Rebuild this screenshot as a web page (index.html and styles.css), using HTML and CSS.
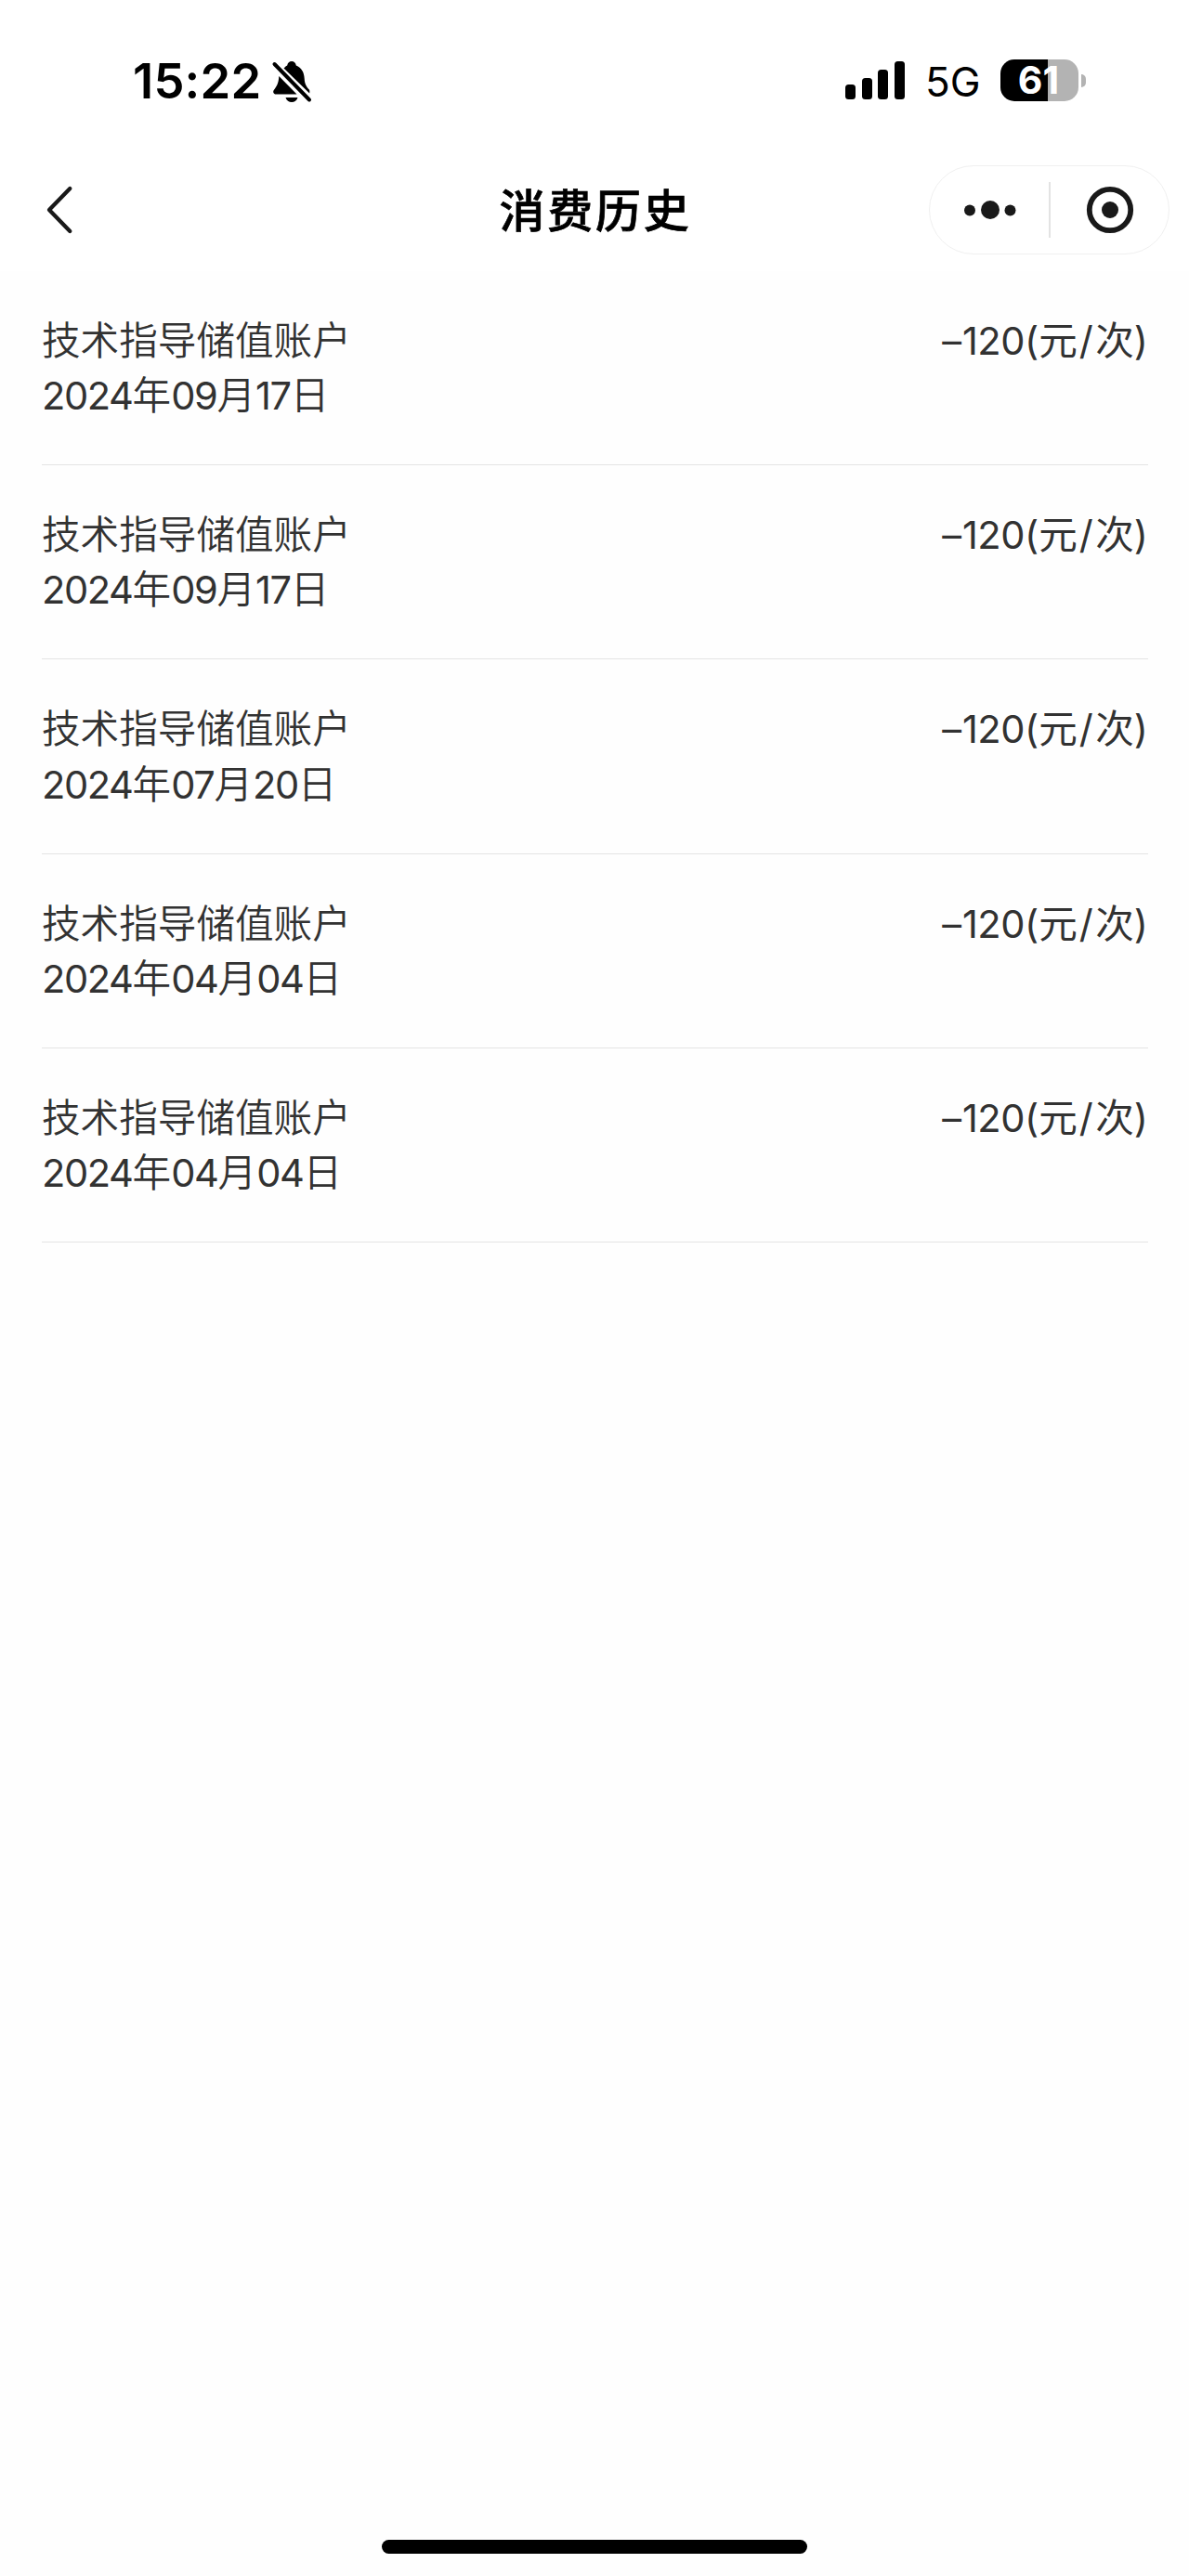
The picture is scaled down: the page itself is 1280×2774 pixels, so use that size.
FILE: index.html
```html
<!DOCTYPE html>
<html lang="zh-CN">
<head>
<meta charset="utf-8">
<title>消费历史</title>
<link rel="stylesheet" href="styles.css">
</head>
<body>
<div class="screen">
  <header class="top">
    <div class="status">
      <div class="status-left">
        <span class="time">15:22</span>
        <svg class="bell" width="44" height="48" viewBox="0 0 44 48">
          <path d="M13.5 9.5C15.200 7.800 16 7 17.200 6.500C17.700 3.700 19.500 2 22 2S26.300 3.700 26.800 6.500C32.500 8.800 35.500 14 35.700 20.500C36 26 37.500 29 40.800 32.500C41.500 33.500 41.400 35 41.200 36.500Z"/>
          <path d="M8.300 18L27.500 37.500H5C2.600 37.500 1.400 35 2.800 33C5.500 29.500 8 26 8.300 18Z"/>
          <path d="M15.500 41H28.500C27.500 44.500 25 46 22 46S16.500 44.500 15.500 41Z"/>
          <path class="slash" d="M3.500 5L41 43.500"/>
        </svg>
      </div>
      <div class="status-right">
        <div class="signal"><i class="bar b1"></i><i class="bar b2"></i><i class="bar b3"></i><i class="bar b4"></i></div>
        <span class="network">5G</span>
        <div class="battery">
          <div class="battery-body">61</div>
          <div class="battery-cap"></div>
        </div>
      </div>
    </div>
    <nav class="nav">
      <svg class="back" width="30" height="54" viewBox="0 0 30 54"><path d="M26.300 4L4 27L26.300 50"/></svg>
      <h1 class="title">消费历史</h1>
      <div class="capsule">
        <svg class="more" width="60" height="30" viewBox="0 0 60 30"><circle cx="8" cy="15.500" r="6"/><circle cx="30" cy="15" r="10"/><circle cx="51.500" cy="15.500" r="6"/></svg>
        <i class="split"></i>
        <svg class="close" width="52" height="52" viewBox="0 0 52 52"><circle class="ring" cx="26" cy="26" r="22.200"/><circle cx="26" cy="26" r="9"/></svg>
      </div>
    </nav>
  </header>
  <main class="list">
    <div class="row"><div class="info"><div>技术指导储值账户</div><div><span class="num">2024</span>年<span class="num">09</span>月<span class="num">17</span>日</div></div><div class="amount"><span class="dash">–</span><span class="num">120</span>(元<span class="per">/</span>次)</div></div>
    <div class="row"><div class="info"><div>技术指导储值账户</div><div><span class="num">2024</span>年<span class="num">09</span>月<span class="num">17</span>日</div></div><div class="amount"><span class="dash">–</span><span class="num">120</span>(元<span class="per">/</span>次)</div></div>
    <div class="row"><div class="info"><div>技术指导储值账户</div><div><span class="num">2024</span>年<span class="num">07</span>月<span class="num">20</span>日</div></div><div class="amount"><span class="dash">–</span><span class="num">120</span>(元<span class="per">/</span>次)</div></div>
    <div class="row"><div class="info"><div>技术指导储值账户</div><div><span class="num">2024</span>年<span class="num">04</span>月<span class="num">04</span>日</div></div><div class="amount"><span class="dash">–</span><span class="num">120</span>(元<span class="per">/</span>次)</div></div>
    <div class="row"><div class="info"><div>技术指导储值账户</div><div><span class="num">2024</span>年<span class="num">04</span>月<span class="num">04</span>日</div></div><div class="amount"><span class="dash">–</span><span class="num">120</span>(元<span class="per">/</span>次)</div></div>
  </main>
  <footer class="foot"><div class="home"></div></footer>
</div>
</body>
</html>
```

FILE: styles.css
```css
* { box-sizing: border-box; }
body { margin: 0; background: #fdfdfd; font-family: Inter, "Noto Sans CJK SC", sans-serif; }
.screen { width: 1280px; height: 2774px; display: flex; flex-direction: column; background: #fefefe; }
.top { height: 292px; background: #fff; }

.status { height: 173px; display: flex; justify-content: space-between; padding: 1px 111px 0 143px; color: #000; }
.status-left, .status-right { display: flex; align-items: center; height: 174px; }
.time { font-size: 52.500px; font-weight: 600; line-height: 60px; width: 149px; white-space: nowrap; letter-spacing: 0.200px; margin-top: -2px; }
.bell { display: block; }
.slash { fill: none; stroke: #000; stroke-width: 4; stroke-linecap: round; }
.signal { display: flex; align-items: flex-end; gap: 6.700px; height: 41px; margin-right: 22px; margin-top: -3px; }
.bar { width: 11px; background: #000; border-radius: 3.500px; }
.b1 { height: 16px; }
.b2 { height: 23px; }
.b3 { height: 32px; }
.b4 { height: 41px; }
.network { width: 81px; font-size: 44px; font-weight: 400; line-height: 60px; margin-top: 0; white-space: nowrap; }
.battery { display: flex; align-items: center; gap: 3px; margin-top: -3px; }
.battery-body { width: 84px; height: 45px; border-radius: 15px; background: linear-gradient(90deg, #000 51px, #b3b3b3 51px); color: #fff; font-size: 41px; font-weight: 700; line-height: 45px; text-align: center; padding-right: 2px; }
.battery-cap { width: 5px; height: 14px; border-radius: 0 5px 5px 0; background: #b3b3b3; }

.nav { height: 105px; display: grid; grid-template-columns: 259px 1fr 259px; align-items: center; padding: 0 21px; }
.back { display: block; margin-left: 28px; fill: none; stroke: #191919; stroke-width: 4.300; stroke-linecap: round; stroke-linejoin: round; }
.title { margin: 5px 0 0 2px; text-align: center; font-size: 49px; font-weight: 500; line-height: 60px; letter-spacing: 2.800px; color: #000; -webkit-text-stroke: 0.700px #000; }
.capsule { width: 259px; height: 96px; border: 1.500px solid #f0f0f0; border-radius: 48px; display: flex; align-items: center; fill: #191919; }
.more { margin-left: 35px; }
.split { width: 2px; height: 60px; margin-left: 33px; background: #e3e3e3; }
.close { margin-left: 38px; }
.ring { fill: none; stroke: #191919; stroke-width: 5.800; }

.list { flex: 1; padding: 0 44px 0 45px; }
.row { height: 209.200px; display: flex; justify-content: space-between; padding-top: 46px; border-bottom: 1px solid #e4e4e4; font-size: 41.600px; font-weight: 350; line-height: 59.200px; color: #323232; white-space: nowrap; }
.num { font-weight: 400; letter-spacing: -1.400px; }
.amount { font-weight: 400; }
.amount .num { letter-spacing: -0.500px; }
.dash { margin-right: 1px; }
.per { padding: 0 2.500px 0 2px; }
.foot { height: 39px; display: flex; justify-content: center; }
.home { width: 458px; height: 15px; border-radius: 8px; background: #000; }
```
